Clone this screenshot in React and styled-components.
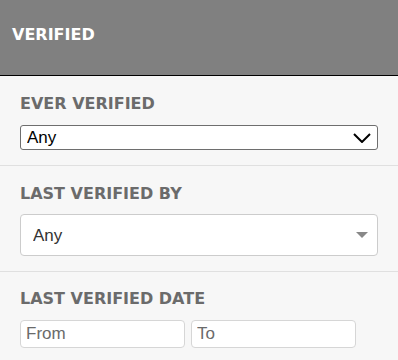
import React from "react";
import styled, { createGlobalStyle } from "styled-components";

const GlobalStyle = createGlobalStyle`
  html, body {
    margin: 0;
    padding: 0;
    background: #f7f7f7;
  }
  * {
    box-sizing: border-box;
  }
`;

const Panel = styled.div`
  width: 398px;
  background: #f7f7f7;
`;

const Header = styled.div`
  height: 76px;
  background: #808080;
  border-bottom: 1px solid #000;
  padding: 25px 12px 0;
  color: #fff;
  font-family: "DejaVu Sans", sans-serif;
  font-weight: bold;
  font-size: 16px;
  line-height: 19px;
`;

const Section = styled.div`
  padding: ${(props) => props.top || 18}px 20px 15px;
  border-bottom: ${(props) => (props.last ? "none" : "1px solid #e0e0e0")};
`;

const Label = styled.div`
  font-family: "DejaVu Sans", sans-serif;
  font-weight: bold;
  font-size: 16px;
  line-height: 19px;
  color: #6b6b6b;
  margin-bottom: ${(props) => props.gap || 12}px;
`;

const SelectWrap = styled.div`
  position: relative;
  width: 100%;
`;

const Select = styled.select`
  appearance: none;
  -webkit-appearance: none;
  display: block;
  width: 100%;
  margin: 0;
  font-family: "Liberation Sans", Arial, sans-serif;
  font-size: 17px;
  outline: none;
  background: #fff;
`;

const NativeSelect = styled(Select)`
  height: 25px;
  padding: 0 30px 0 6px;
  border: 1px solid #6e6e6e;
  border-radius: 3px;
  color: #000;
`;

const FancySelect = styled(Select)`
  height: 42px;
  padding: 0 40px 0 12px;
  border: 1px solid #cccccc;
  border-radius: 4px;
  color: #333;
`;

const Arrow = styled.svg`
  position: absolute;
  top: 50%;
  right: ${(props) => props.right}px;
  transform: translateY(-50%);
  pointer-events: none;
`;

const DateRow = styled.div`
  display: flex;
  gap: 6px;
`;

const DateInput = styled.input`
  width: 165px;
  height: 28px;
  margin: 0;
  padding: 0 5px;
  border: 1px solid #d6d6d6;
  border-radius: 4px;
  background: #fff;
  font-family: "Liberation Sans", Arial, sans-serif;
  font-size: 17px;
  color: #333;
  outline: none;
  &::placeholder {
    color: #6a6a6a;
  }
`;

const App = () => {
  return (
    <Panel>
      <GlobalStyle />
      <Header>VERIFIED</Header>

      <Section>
        <Label>EVER VERIFIED</Label>
        <SelectWrap>
          <NativeSelect defaultValue="any">
            <option value="any">Any</option>
            <option value="yes">Yes</option>
            <option value="no">No</option>
          </NativeSelect>
          <Arrow right={7} width="18" height="10" viewBox="0 0 18 10">
            <path d="M1 1 L9 9 L17 1" fill="none" stroke="#000" strokeWidth="2" />
          </Arrow>
        </SelectWrap>
      </Section>

      <Section>
        <Label gap={11}>LAST VERIFIED BY</Label>
        <SelectWrap>
          <FancySelect defaultValue="any">
            <option value="any">Any</option>
          </FancySelect>
          <Arrow right={10} width="12" height="6" viewBox="0 0 12 6">
            <path d="M0 0 L12 0 L6 6 Z" fill="#888" />
          </Arrow>
        </SelectWrap>
      </Section>

      <Section top={17} last>
        <Label>LAST VERIFIED DATE</Label>
        <DateRow>
          <DateInput placeholder="From" />
          <DateInput placeholder="To" />
        </DateRow>
      </Section>
    </Panel>
  );
};

export default App;
